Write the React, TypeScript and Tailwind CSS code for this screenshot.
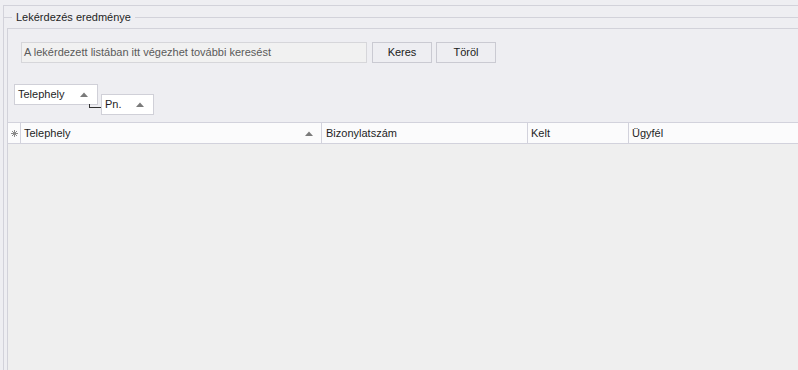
import React from "react";

function SortUp({ className = "" }: { className?: string }) {
  return (
    <svg width="8" height="5" viewBox="0 0 8 5" className={className}>
      <path d="M0 5 L4 0.5 L8 5 Z" fill="#7a7a7a" />
    </svg>
  );
}

function NewRowMark() {
  return (
    <svg width="7" height="7" viewBox="0 0 7 7">
      <g stroke="#8a8a8a" strokeWidth="1">
        <line x1="3.5" y1="0" x2="3.5" y2="7" />
        <line x1="0" y1="3.5" x2="7" y2="3.5" />
        <line x1="1" y1="1" x2="6" y2="6" />
        <line x1="6" y1="1" x2="1" y2="6" />
      </g>
    </svg>
  );
}

function GroupChip({ label, width }: { label: string; width: string }) {
  return (
    <div
      className={`${width} h-[21px] bg-white border border-[#d0d0d8] flex items-center justify-between pl-[3px] pr-[9px] text-[#1e1e1e]`}
    >
      <span>{label}</span>
      <SortUp />
    </div>
  );
}

export default function App() {
  return (
    <div className="w-[798px] h-[370px] overflow-hidden bg-[#eeeef2] font-['Liberation_Sans',Arial,sans-serif] text-[11px] leading-none">
      <div className="h-[5px]" />
      <div className="ml-[3px] h-[365px] border-l border-t border-[#d2d2da] flex flex-col">
        {/* Group caption */}
        <div className="h-[22px] flex items-center">
          <div className="w-[8px] border-t border-[#d2d2da]" />
          <span className="px-[4px] text-[#1e1e1e]">Lekérdezés eredménye</span>
          <div className="flex-1 border-t border-[#d2d2da]" />
        </div>

        {/* Inner panel */}
        <div className="ml-[3px] flex-1 border-l border-t border-[#d2d2da] flex flex-col">
          {/* Search row */}
          <div className="flex items-center pt-[13px] pl-[13px]">
            <div className="w-[346px] h-[21px] bg-[#f1f1f1] border border-[#d6d6da] flex items-center pl-[2px] text-[#5a5a5a]">
              A lekérdezett listában itt végezhet további keresést
            </div>
            <button className="ml-[5px] w-[60px] h-[21px] border border-[#cacad2] bg-[#eeeef2] text-[#202020]">
              Keres
            </button>
            <button className="ml-[4px] w-[60px] h-[21px] border border-[#cacad2] bg-[#eeeef2] text-[#202020]">
              Töröl
            </button>
          </div>

          {/* Group by panel */}
          <div className="relative flex items-start pl-[6px] pt-[21px] h-[59px]">
            <GroupChip label="Telephely" width="w-[84px]" />
            <div className="ml-[3px] mt-[10px]">
              <GroupChip label="Pn." width="w-[53px]" />
            </div>
            <div className="absolute left-[81px] top-[41px] w-[12px] h-[4px] border-l border-b border-[#303030]" />
          </div>

          {/* Grid header */}
          <div className="h-[22px] bg-[#fbfbfc] border-t border-b border-[#d2d2dc] flex text-[#1e1e1e]">
            <div className="w-[12px] flex items-center justify-center">
              <NewRowMark />
            </div>
            <div className="w-[301px] border-l border-[#d2d2dc] flex items-center justify-between pl-[3px] pr-[8px]">
              <span>Telephely</span>
              <SortUp />
            </div>
            <div className="w-[206px] border-l border-[#d2d2dc] flex items-center pl-[4px]">
              Bizonylatszám
            </div>
            <div className="w-[101px] border-l border-[#d2d2dc] flex items-center pl-[3px]">
              Kelt
            </div>
            <div className="flex-1 border-l border-[#d2d2dc] flex items-center pl-[3px]">
              Ügyfél
            </div>
          </div>

          {/* Empty grid body */}
          <div className="flex-1 bg-[#efefef]" />
        </div>
      </div>
    </div>
  );
}
